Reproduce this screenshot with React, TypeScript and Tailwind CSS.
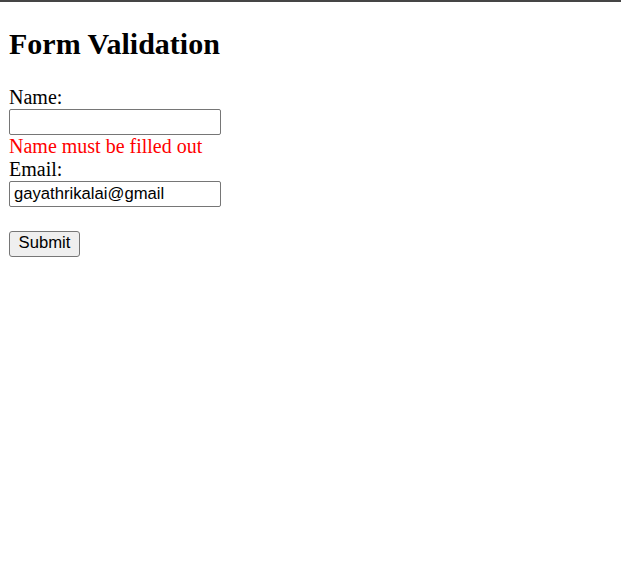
import React from 'react';

const App: React.FC = () => {
  return (
    <div className="min-h-[565px] w-full bg-white border-t-2 border-[#454545] pt-[25px] pl-[9px] font-['Liberation_Serif',serif] text-black">
      <h2 className="text-[30px] font-bold leading-[34.5px] mb-[24px]">Form Validation</h2>

      <form className="flex flex-col items-start" onSubmit={(e) => e.preventDefault()}>
        <label className="text-[20px] leading-[23px]">Name:</label>
        <input
          type="text"
          className="h-[26px] w-[212px] rounded-[2px] border border-[#767676] px-[4px] font-['Liberation_Sans',Arial,sans-serif] text-[16.67px] outline-none"
        />
        <span className="text-[20px] leading-[23px] text-[#ff0000]">Name must be filled out</span>
        <label className="text-[20px] leading-[23px]">Email:</label>
        <input
          type="text"
          defaultValue="gayathrikalai@gmail"
          className="h-[26px] w-[212px] rounded-[2px] border border-[#767676] px-[4px] font-['Liberation_Sans',Arial,sans-serif] text-[16.67px] outline-none"
        />
        <div className="h-[24px]" />
        <button
          type="submit"
          className="h-[26px] w-[71px] rounded-[3px] border border-[#767676] bg-[#efefef] font-['Liberation_Sans',Arial,sans-serif] text-[16.67px] leading-none text-black"
        >
          Submit
        </button>
      </form>
    </div>
  );
};

export default App;
